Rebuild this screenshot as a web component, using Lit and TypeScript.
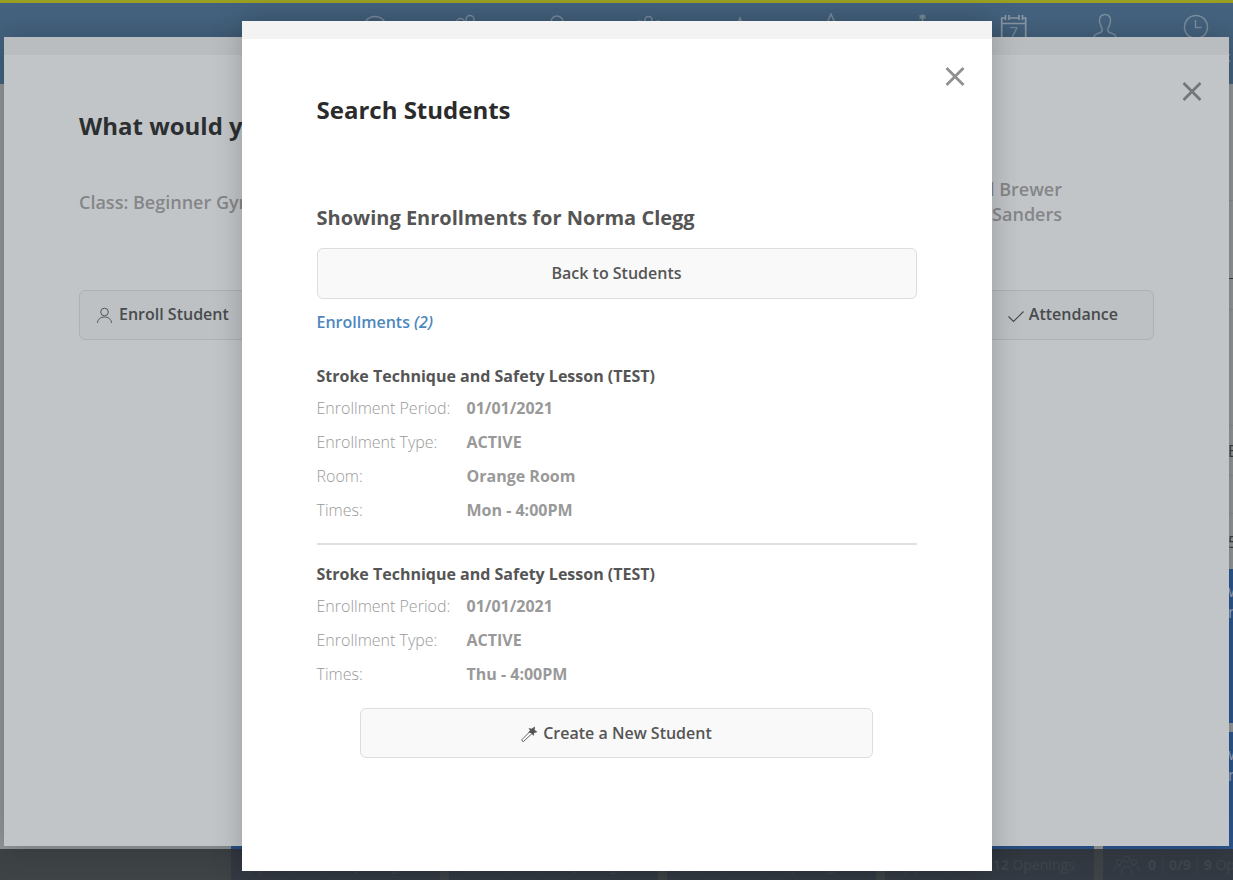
import { LitElement, html, css, svg } from "lit";
import { customElement, property } from "lit/decorators.js";

const navIcons = [
  { name: "Dashboard", art: svg`<circle cx="12" cy="15" r="11.5"/><path d="M12 8v7h5"/>` },
  { name: "Families", art: svg`<circle cx="6.500" cy="9.500" r="4"/><circle cx="16" cy="6.500" r="4"/><path d="M1 26c0-8 12-8 12 0M14 18c5-3 10 0 10 8"/>` },
  { name: "Students", art: svg`<circle cx="12" cy="9" r="6"/><path d="M1 27c0-14 22-14 22 0"/>` },
  { name: "Classes", art: svg`<circle cx="12.500" cy="7" r="3.600"/><circle cx="3.500" cy="11" r="3"/><circle cx="22" cy="11" r="3"/><path d="M6 26c0-12 14-12 14 0"/>` },
  { name: "Events", art: svg`<path d="M13 5l10 21H3z"/>` },
  { name: "Favorites", art: svg`<path d="M13 1l4 9 9 1-7 6 2 9-8-5-8 5 2-9-7-6 9-1z"/>` },
  { name: "Camps", art: svg`<path d="M13.500 1v6M10.500 2.500l6 3M16.500 2.500l-6 3M13.500 7v18M8 25h12"/>` },
  { name: "Calendar", art: svg`<path d="M6 5H1.700v22h24V5H22M10 5h8M1.700 10.500h24M5.500 2v5M9 2v5M19 2v5M22.500 2v5" stroke="#8c9aa6" stroke-width="1.700"/><text x="9.500" y="23.500" font-size="15">7</text>` },
  { name: "Staff", art: svg`<path d="M14 1.500c-4 0-6 3-5.500 7 .5 4 3 6 2.700 9C10 22 3 18 2.500 26M14 1.500c4 0 6 3 5.500 7-.5 4-3 6-2.700 9C18 22 25 18 25.500 26"/>` },
  { name: "Time Clock", art: svg`<circle cx="14" cy="14" r="11.500"/><path d="M13.500 7v7.500h6"/>` },
];

@customElement("modal-panel")
class ModalPanel extends LitElement {
  @property() heading = "";

  static styles = css`
    :host {
      display: flex;
      flex-direction: column;
      position: relative;
      background: var(--panel, #fff);
      box-shadow: 0 0 28px rgba(0, 0, 0, 0.22);
    }
    .strip { height: 18px; background: var(--strip, #f3f3f3); }
    .body { padding: 53px 75px 113px; }
    h2 { margin: 0; font-size: 24px; line-height: 36px; font-weight: 700; color: var(--title, #2b2b2b); white-space: nowrap; }
    .close {
      position: absolute;
      top: var(--close-top, 44px);
      right: 26px;
      width: 22px;
      height: 22px;
      padding: 0;
      border: 0;
      background: none;
      color: var(--close, #909090);
    }
    svg { display: block; width: 22px; height: 22px; }
  `;

  render() {
    return html`
      <div class="strip"></div>
      <button class="close" aria-label="Close">
        <svg viewBox="0 0 22 22" fill="none" stroke="currentColor" stroke-width="2.800"><path d="M2.500 3l17 17M19.500 3l-17 17"/></svg>
      </button>
      <div class="body"><h2>${this.heading}</h2><slot></slot></div>
    `;
  }
}

@customElement("app-root")
class AppRoot extends LitElement {
  static styles = css`
    :host {
      display: block;
      position: relative;
      height: 100vh;
      overflow: hidden;
      font-family: "Open Sans", "Noto Sans", sans-serif;
      font-size: 16px;
      color: #555;
    }
    * { box-sizing: border-box; }
    .page { height: 100%; display: flex; flex-direction: column; background: #929698; }
    .top {
      display: flex;
      justify-content: flex-end;
      height: 84px;
      flex: none;
      border-top: 3px solid #99a021;
      background: #44627e;
      color: #7b8e9d;
    }
    .top a {
      flex: 0 0 91px;
      display: flex;
      flex-direction: column;
      align-items: center;
      gap: 6px;
      padding-top: 10px;
      color: inherit;
      font-size: 14px;
      line-height: 20px;
      text-decoration: none;
      white-space: nowrap;
    }
    .top nav { display: flex; margin-right: -8px; }
    .top svg { width: 28px; height: 28px; fill: none; stroke: currentColor; stroke-width: 1.5; }
    .top text { fill: currentColor; stroke: none; }
    .board { flex: 1; min-height: 0; display: grid; grid-template-columns: 222px repeat(5, 209px); column-gap: 9px; overflow: hidden; }
    .column { display: flex; flex-direction: column; gap: 9px; padding-top: 485px; min-width: 0; }
    .column.first { padding-top: 0; }
    .column.last { padding-top: 116px; gap: 0; }
    .cell { flex: none; border-top: 1px solid #878b8e; padding-left: 125px; color: #3b3f42; line-height: 24px; white-space: nowrap; }
    .cell.dark { border-color: #3b3f42; }
    .h30 { height: 31px; } .h78 { height: 78px; } .h116 { height: 116px; } .h50 { height: 50px; } .h38 { height: 38px; } .h56 { height: 56px; }
    .cell.words { display: flex; align-items: center; }
    .card { flex: none; height: 154px; padding: 12px 0 0 125px; background: #2c568f; color: #9aa5b5; font-size: 16px; line-height: 21px; white-space: nowrap; }
    .last .card + .card { margin-top: 9px; }
    .foot { flex: none; height: 31px; display: grid; grid-template-columns: 222px repeat(5, 209px); column-gap: 9px; background: #3e4346; overflow: hidden; }
    .stats { display: flex; align-items: center; gap: 8px; padding: 0 10px; background: #343a43; color: #40464b; font-size: 14px; white-space: nowrap; }
    .stats svg { width: 27px; height: 20px; flex: none; fill: none; stroke: currentColor; }
    .stats .sep { width: 1px; height: 20px; margin: 0 -2px; background: #393f47; }
    .stats.wide-count { gap: 9px; padding-left: 12px; }
    .layer { position: absolute; inset: 0; overflow: hidden; }
    .under { padding: 37px 4px 34px; }
    .under modal-panel {
      height: 100%;
      --panel: #c2c5c8;
      --strip: #b9bdbf;
      --title: #2c2f31;
      --close: #74777a;
      --close-top: 43px;
    }
    .over { padding: 21px 4px 9px; display: flex; justify-content: center; align-items: flex-start; }
    .over modal-panel { width: 750px; }
    .info { display: flex; justify-content: space-between; align-items: center; margin-top: 33px; padding-right: 92px; font-size: 18px; line-height: 25px; font-weight: 600; color: #848688; }
    .info b { font-weight: 600; }
    .info p { margin: 0; }
    .people { text-align: right; }
    .actions { display: flex; justify-content: space-between; margin-top: 63px; }
    button.btn {
      display: flex;
      align-items: center;
      justify-content: center;
      gap: 5px;
      height: 50px;
      border: 1px solid #ddd;
      border-radius: 6px;
      background: #f9f9f9;
      color: #555;
      font: 600 16px/24px "Open Sans", "Noto Sans", sans-serif;
      white-space: nowrap;
    }
    button.btn svg { width: 17px; height: 17px; margin-top: 3px; fill: none; stroke: currentColor; stroke-width: .9; }
    .actions button.btn { width: 200px; justify-content: flex-start; padding: 0 16px 2px; gap: 6px; background: #bdc1c3; border-color: #acb1b3; color: #484b4d; }
    .actions button.btn:last-child { justify-content: flex-end; padding-right: 35px; gap: 4px; }
    h3 { margin: 75px 0 15px; font-size: 20px; line-height: 30px; font-weight: 700; color: #555; }
    button.wide { width: 100%; height: 51px; padding-bottom: 2px; }
    .count { display: table; margin-top: 11px; color: #4d87bd; font-weight: 600; line-height: 24px; text-decoration: none; }
    .lesson h4 { margin: 0; font-size: 16px; line-height: 28px; font-weight: 700; color: #555; }
    .list { margin-top: 28px; }
    .lesson + .lesson { margin-top: 16px; padding-top: 15px; border-top: 2px solid #dfe0e0; }
    dl { display: grid; grid-template-columns: 150px 1fr; margin: 1px 0 0; line-height: 34px; color: #999; }
    dt { font-weight: 300; }
    dd { margin: 0; font-weight: 700; }
    .create { display: flex; justify-content: center; margin-top: 17px; }
    .create button.btn { width: 513px; }
  `;

  private lessons = [
    { title: "Stroke Technique and Safety Lesson (TEST)", rows: [["Enrollment Period:", "01/01/2021"], ["Enrollment Type:", "ACTIVE"], ["Room:", "Orange Room"], ["Times:", "Mon - 4:00PM"]] },
    { title: "Stroke Technique and Safety Lesson (TEST)", rows: [["Enrollment Period:", "01/01/2021"], ["Enrollment Type:", "ACTIVE"], ["Times:", "Thu - 4:00PM"]] },
  ];

  private stats(openings: number) {
    return html`<div class=${openings > 9 ? "stats wide-count" : "stats"}>
      <svg viewBox="0 0 27 20"><circle cx="13.500" cy="4" r="3"/><circle cx="6" cy="7" r="2.500"/><circle cx="21" cy="7" r="2.500"/><path d="M8 19c0-10 11-10 11 0M1 16c0-5 4-7 7-5M26 16c0-5-4-7-7-5"/></svg>
      <b>0</b><span class="sep"></span><b>0/9</b><span class="sep"></span><span><b>${openings}</b> Openings</span>
    </div>`;
  }

  render() {
    return html`
      <div class="page">
        <header class="top">
          <nav>
            ${navIcons.map((i) => html`<a href="#" aria-label=${i.name}><svg viewBox="0 0 28 28">${i.art}</svg>${i.name === "Time Clock" ? i.name : ""}</a>`)}
          </nav>
        </header>
        <div class="board">
          <div class="column first"></div>
          ${[1, 2, 3, 4].map(() => html`<div class="column"><div class="card"></div><div class="card"></div></div>`)}
          <div class="column last">
            <div class="cell h78"></div>
            <div class="cell dark h30"></div>
            <div class="cell h116"></div>
            <div class="cell words h50">Ele</div>
            <div class="cell h38"></div>
            <div class="cell words h56">5</div>
            <div class="card">w<br>n</div>
            <div class="card">w<br>n</div>
          </div>
        </div>
        <footer class="foot"><div></div>${[9, 9, 9, 12, 9].map((n) => this.stats(n))}</footer>
      </div>

      <div class="layer under">
        <modal-panel heading="What would you like to do?">
          <div class="info">
            <p><b>Class:</b> Beginner Gymnastics</p>
            <div class="people"><p>Paul Brewer</p><p>Sanders</p></div>
          </div>
          <div class="actions">
            <button class="btn"><svg viewBox="0 0 17 17"><circle cx="8.500" cy="5" r="3.800"/><path d="M1.500 16c0-8 14-8 14 0"/></svg>Enroll Student</button>
            <button class="btn"><svg viewBox="0 0 17 17"><path d="M.500 9.500l5 5L15.500 4.500" stroke-width="1.200"/></svg>Attendance</button>
          </div>
        </modal-panel>
      </div>

      <div class="layer over">
        <modal-panel heading="Search Students" role="dialog">
          <h3>Showing Enrollments for Norma Clegg</h3>
          <button class="btn wide">Back to Students</button>
          <a class="count" href="#">Enrollments <i>(2)</i></a>
          <div class="list">
            ${this.lessons.map((l) => html`<section class="lesson">
              <h4>${l.title}</h4>
              <dl>${l.rows.map(([k, v]) => html`<dt>${k}</dt><dd>${v}</dd>`)}</dl>
            </section>`)}
          </div>
          <div class="create">
            <button class="btn"><svg viewBox="0 0 17 17"><path d="M9 5.500L1 13.500q-.5 2 1.500 2L11 7.500z"/><path d="M7.500 2l3 .8L14 .5l-.3 3.500L16.500 6l-3.300 1L12.500 10l-2.300-3-3-.5 1.800-2z" fill="currentColor" stroke="none"/></svg>Create a New Student</button>
          </div>
        </modal-panel>
      </div>
    `;
  }
}
